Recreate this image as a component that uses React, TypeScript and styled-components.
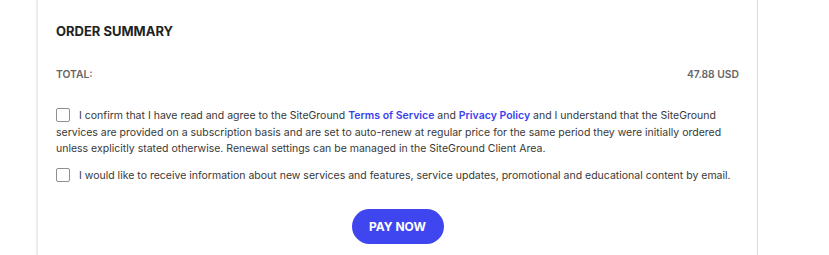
import React from "react";
import styled, { createGlobalStyle } from "styled-components";

const Global = createGlobalStyle`
  html, body { margin: 0; padding: 0; background: #fff; }
  body { font-family: Inter, "Noto Sans", sans-serif; }
`;

const Page = styled.div`
  width: 829px;
  height: 255px;
  overflow: hidden;
  background: #fff;
  padding-left: 36px;
  box-sizing: border-box;
`;

const Panel = styled.section`
  width: 722px;
  min-height: 300px;
  box-sizing: border-box;
  border-left: 2px solid #ececec;
  border-right: 1px solid #dcdcdc;
  padding: 23px 18px 0 18px;
  display: flex;
  flex-direction: column;
`;

const Heading = styled.h2`
  margin: 0;
  font-family: Inter, sans-serif;
  font-weight: 700;
  font-size: 13px;
  line-height: 17px;
  color: #222;
`;

const TotalRow = styled.div`
  margin-top: 28px;
  display: flex;
  justify-content: space-between;
  font-family: Inter, sans-serif;
  font-weight: 600;
  font-size: 10.3px;
  line-height: 13px;
  color: #666;
`;

const Agreement = styled.label<{ $top: number }>`
  display: block;
  margin-top: ${(p) => p.$top}px;
  font-family: Inter, sans-serif;
  font-size: 10.5px;
  line-height: 16.6px;
  color: #383838;
`;

const Box = styled.span`
  display: inline-block;
  width: 14px;
  height: 14px;
  border: 1px solid #8f8f8f;
  border-radius: 2px;
  vertical-align: -3px;
  margin-right: 9px;
  box-sizing: border-box;
  background: #fff;
`;

const Link = styled.a`
  color: #3b3ff0;
  font-weight: 600;
  text-decoration: none;
`;

const ButtonRow = styled.div`
  display: flex;
  justify-content: center;
  margin-top: 25px;
`;

const PayButton = styled.button`
  width: 92px;
  height: 35px;
  border: none;
  border-radius: 18px;
  background: #4046ef;
  color: #fff;
  font-family: Inter, sans-serif;
  font-weight: 700;
  font-size: 12px;
  cursor: pointer;
`;

export default function App() {
  return (
    <>
      <Global />
      <Page>
        <Panel>
          <Heading>ORDER SUMMARY</Heading>
          <TotalRow>
            <span>TOTAL:</span>
            <span>47.88 USD</span>
          </TotalRow>
          <Agreement $top={27}>
            <Box />
            I confirm that I have read and agree to the SiteGround{" "}
            <Link href="#">Terms of Service</Link> and{" "}
            <Link href="#">Privacy Policy</Link> and I understand that the
            SiteGround services are provided on a subscription basis and are set
            to auto-renew at regular price for the same period they were
            initially ordered unless explicitly stated otherwise. Renewal
            settings can be managed in the SiteGround Client Area.
          </Agreement>
          <Agreement $top={10}>
            <Box />
            I would like to receive information about new services and features,
            service updates, promotional and educational content by email.
          </Agreement>
          <ButtonRow>
            <PayButton>PAY NOW</PayButton>
          </ButtonRow>
        </Panel>
      </Page>
    </>
  );
}
